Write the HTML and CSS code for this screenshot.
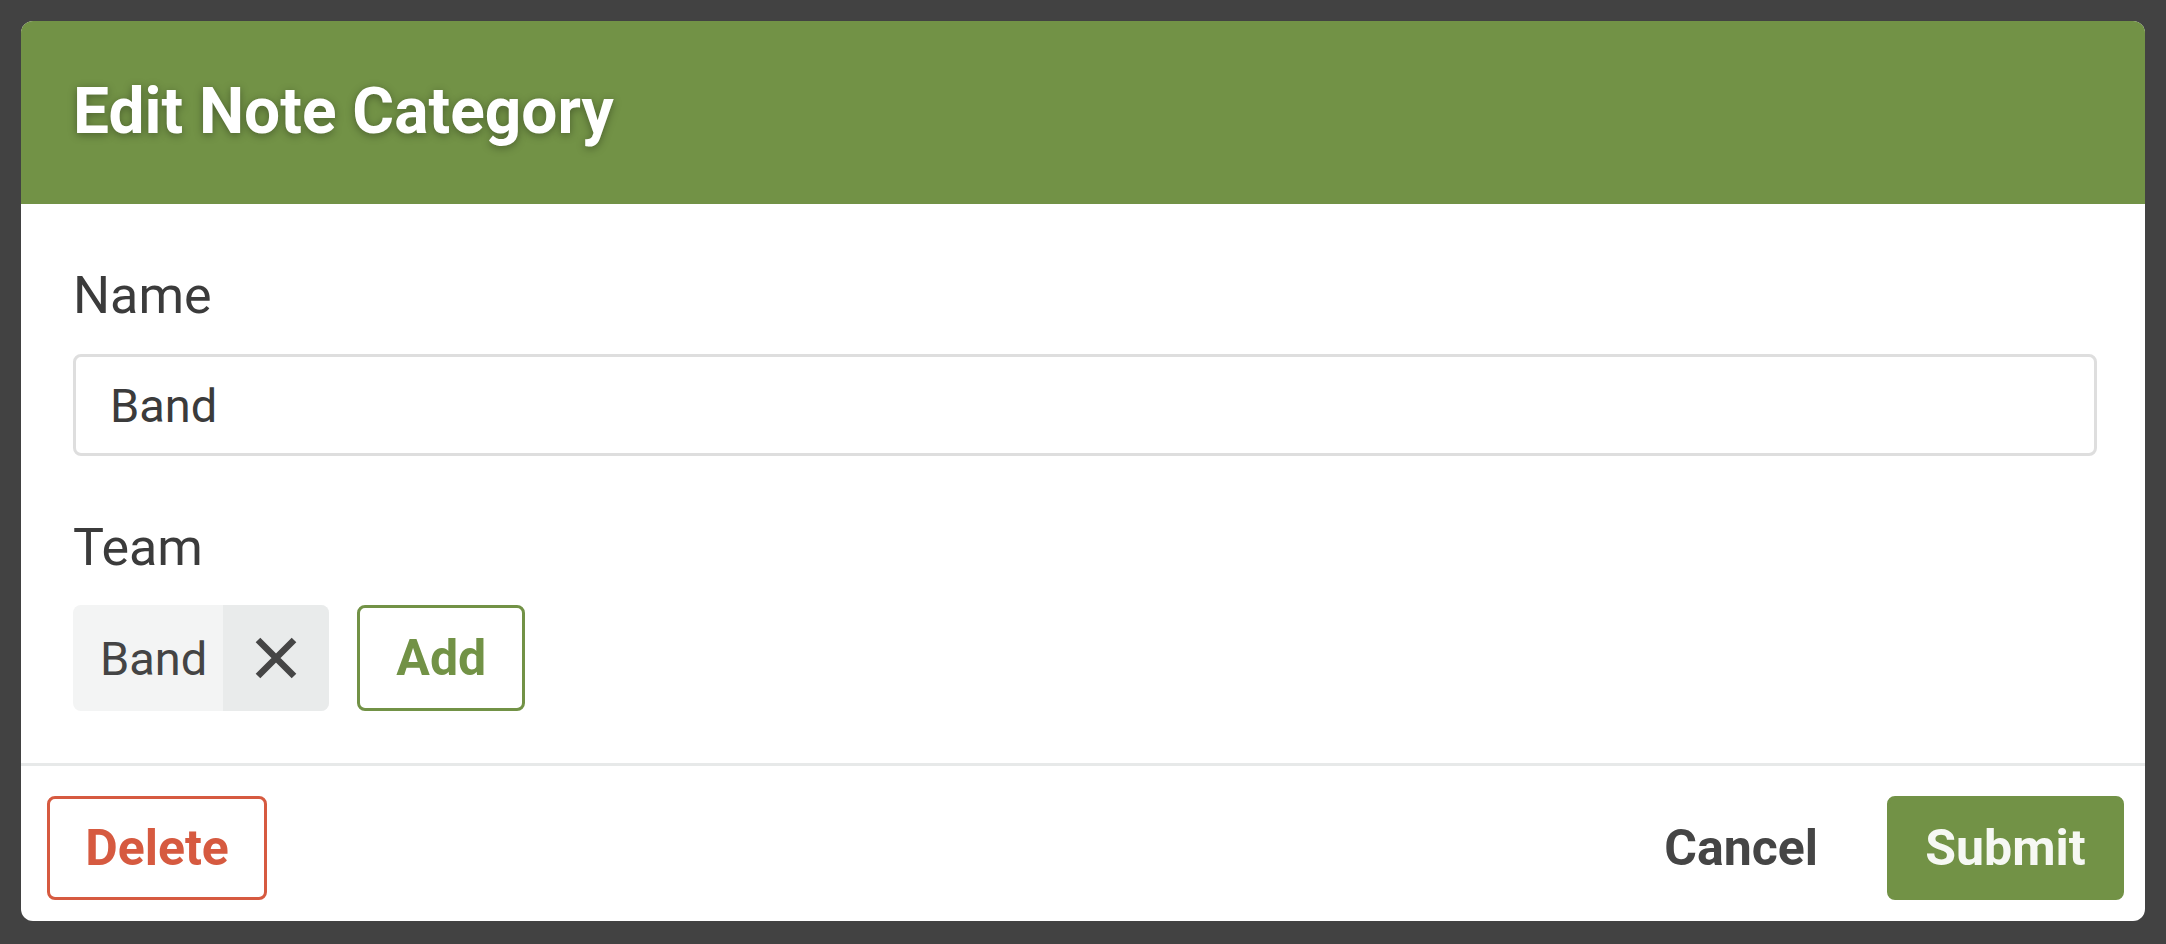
FILE: index.html
```html
<!DOCTYPE html>
<html lang="en">
<head>
<meta charset="utf-8">
<title>Edit Note Category</title>
<link rel="stylesheet" href="styles.css">
</head>
<body>
<div class="modal">
  <header class="modal-header">
    <h1 class="modal-title">Edit Note Category</h1>
  </header>
  <div class="modal-body">
    <div class="field">
      <label class="field-label" for="name">Name</label>
      <input class="text-input" id="name" type="text" value="Band">
    </div>
    <div class="field field-team">
      <label class="field-label">Team</label>
      <div class="chip-row">
        <div class="chip">
          <span class="chip-text">Band</span>
          <span class="chip-remove">
            <svg class="chip-x" viewBox="0 0 44 44" width="44" height="44" aria-hidden="true">
              <path d="M4 4 L40 40 M40 4 L4 40" stroke="#454545" stroke-width="6.5" fill="none"/>
            </svg>
          </span>
        </div>
        <button class="btn btn-add" type="button">Add</button>
      </div>
    </div>
  </div>
  <footer class="modal-footer">
    <button class="btn btn-delete" type="button">Delete</button>
    <div class="footer-actions">
      <button class="btn btn-cancel" type="button">Cancel</button>
      <button class="btn btn-submit" type="button">Submit</button>
    </div>
  </footer>
</div>
</body>
</html>
```

FILE: styles.css
```css
* {
  box-sizing: border-box;
}

html, body {
  margin: 0;
  height: 100%;
}

body {
  background: #424242;
  padding: 21px;
  font-family: "Roboto", "Liberation Sans", sans-serif;
  color: #3b3b3b;
}

.modal {
  width: 2124px;
  height: 900px;
  background: #ffffff;
  border-radius: 12px;
  overflow: hidden;
  display: flex;
  flex-direction: column;
}

.modal-header {
  height: 183px;
  background: #729246;
  display: flex;
  align-items: center;
  padding: 0 52px;
  flex: none;
}

.modal-title {
  margin: 0;
  font-size: 64px;
  font-weight: 700;
  color: #ffffff;
  line-height: 1.2;
  text-shadow: 0 2px 8px rgba(0, 0, 0, 0.35);
}

.modal-body {
  padding: 61px 48px 52px 52px;
  flex: none;
}

.field {
  display: flex;
  flex-direction: column;
}

.field-team {
  margin-top: 61px;
}

.field-label {
  font-size: 52px;
  line-height: 62px;
  color: #3b3b3b;
  margin-bottom: 27px;
}

.field-team .field-label {
  margin-bottom: 26px;
}

.text-input {
  width: 2024px;
  height: 102px;
  border: 3px solid #dedede;
  border-radius: 8px;
  padding: 0 34px;
  font-family: inherit;
  font-size: 47px;
  color: #3b3b3b;
  background: #ffffff;
  outline: none;
}

.chip-row {
  display: flex;
  align-items: center;
  gap: 28px;
}

.chip {
  display: flex;
  height: 106px;
  border-radius: 8px;
  overflow: hidden;
  background: #f3f4f4;
}

.chip-text {
  display: flex;
  align-items: center;
  padding: 0 16px 0 27px;
  font-size: 47px;
  color: #444444;
}

.chip-remove {
  width: 106px;
  display: flex;
  align-items: center;
  justify-content: center;
  background: #e9ebeb;
}

.chip-x {
  display: block;
}

.btn {
  font-family: inherit;
  font-weight: 700;
  font-size: 50px;
  height: 104px;
  border-radius: 8px;
  background: transparent;
  border: 3px solid transparent;
  padding: 0 38px;
  cursor: pointer;
  line-height: 1;
}

.btn-add {
  height: 106px;
  width: 168px;
  padding: 0;
  border-color: #729246;
  color: #729246;
}

.modal-footer {
  flex: none;
  border-top: 3px solid #e7e9e9;
  padding: 30px 21px 21px 26px;
  display: flex;
  justify-content: space-between;
  align-items: center;
}

.btn-delete {
  width: 220px;
  padding: 0;
  border-color: #d65a40;
  color: #d65a40;
}

.footer-actions {
  display: flex;
  align-items: center;
  gap: 28px;
}

.btn-cancel {
  color: #454545;
}

.btn-submit {
  width: 237px;
  padding: 0;
  background: #729246;
  border-color: #729246;
  color: #f6f8f3;
}
```
